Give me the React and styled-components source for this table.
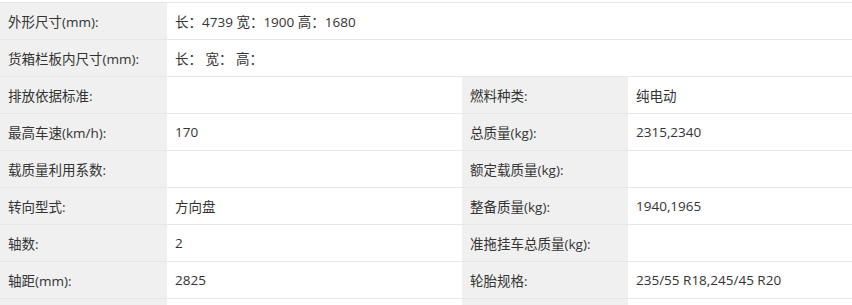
import React from 'react';
import styled, { createGlobalStyle } from 'styled-components';

const GlobalStyle = createGlobalStyle`
  html, body {
    margin: 0;
    padding: 0;
    background: #ffffff;
  }
`;

const Wrapper = styled.div`
  padding-top: 2px;
  width: 852px;
  height: 303px;
  overflow: hidden;
`;

const Table = styled.table`
  width: 852px;
  border-collapse: collapse;
  table-layout: fixed;
  font-family: "Open Sans", "Noto Sans CJK SC", sans-serif;
  font-size: 13.5px;
  color: #333333;
`;

const Col = styled.col`
  width: ${props => props.$w}px;
`;

const Cell = styled.td`
  height: 37px;
  padding: 0 0 1px 8px;
  border-top: 1px solid #e6e6e6;
  border-bottom: 1px solid #e6e6e6;
  background: ${props => (props.$label ? '#f0f0f0' : '#ffffff')};
  text-align: left;
  vertical-align: middle;
  white-space: nowrap;
  box-sizing: border-box;
`;

const widths = [167, 295, 166, 224];

const rows = [
  { full: true, label: '外形尺寸(mm):', value: '长：4739 宽：1900 高：1680' },
  { full: true, label: '货箱栏板内尺寸(mm):', value: '长：  宽：  高：' },
  { cells: ['排放依据标准:', '', '燃料种类:', '纯电动'] },
  { cells: ['最高车速(km/h):', '170', '总质量(kg):', '2315,2340'] },
  { cells: ['载质量利用系数:', '', '额定载质量(kg):', ''] },
  { cells: ['转向型式:', '方向盘', '整备质量(kg):', '1940,1965'] },
  { cells: ['轴数:', '2', '准拖挂车总质量(kg):', ''] },
  { cells: ['轴距(mm):', '2825', '轮胎规格:', '235/55 R18,245/45 R20'] },
  { cells: ['', '', '', ''] },
];

const App = () => (
  <>
    <GlobalStyle />
    <Wrapper>
      <Table>
        <colgroup>
          {widths.map((w, i) => <Col key={i} $w={w} />)}
        </colgroup>
        <tbody>
          {rows.map((row, i) =>
            row.full ? (
              <tr key={i}>
                <Cell $label>{row.label}</Cell>
                <Cell colSpan={3}>{row.value}</Cell>
              </tr>
            ) : (
              <tr key={i}>
                {row.cells.map((text, j) => (
                  <Cell key={j} $label={j % 2 === 0}>{text}</Cell>
                ))}
              </tr>
            )
          )}
        </tbody>
      </Table>
    </Wrapper>
  </>
);

export default App;
